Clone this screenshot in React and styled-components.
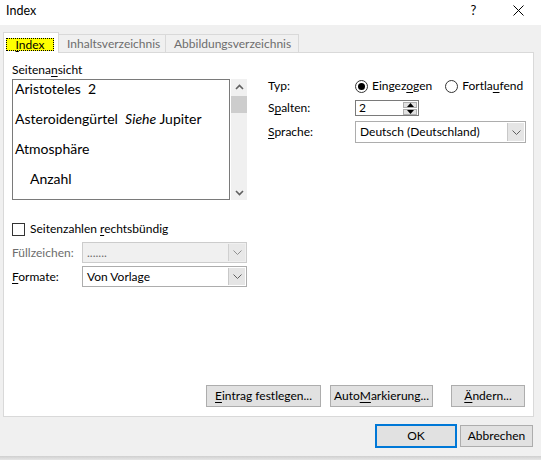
import React from 'react';
import styled, { createGlobalStyle } from 'styled-components';

const Global = createGlobalStyle`
  html, body { margin: 0; padding: 0; background: #ffffff; }
  body {
    font-family: Lato, "Noto Sans", sans-serif;
    font-size: 12px;
    color: #000;
  }
  * { box-sizing: border-box; }
`;

const Frame = styled.div`
  width: 541px;
  height: 460px;
  display: flex;
  flex-direction: column;
  overflow: hidden;
`;

const Window = styled.div`
  width: 541px;
  height: 456px;
  background: #f0f0f0;
  display: flex;
  flex-direction: column;
`;

const Shadow = styled.div`
  height: 4px;
  background: linear-gradient(#cfcfcf, #e6e6e6);
`;

const TitleBar = styled.div`
  height: 25px;
  background: #ffffff;
  display: flex;
  align-items: center;
  padding-left: 6px;
`;

const Title = styled.div`
  flex: 1;
  font-size: 12.5px;
  line-height: 16px;
  margin-top: -4px;
`;

const TitleButton = styled.div`
  width: 45px;
  height: 25px;
  display: flex;
  align-items: center;
  justify-content: center;
  margin-top: -5px;
  font-size: 13px;
`;

const TabStrip = styled.div`
  display: flex;
  align-items: flex-end;
  margin-top: 7px;
  padding-left: 3px;
  height: 20px;
  position: relative;
  z-index: 1;
`;

const Tab = styled.div`
  height: ${p => (p.$active ? '21px' : '18px')};
  width: ${p => p.$w}px;
  margin-bottom: ${p => (p.$active ? '-1px' : '0')};
  background: ${p => (p.$active ? '#ffffff' : '#f0f0f0')};
  border: 1px solid #d9d9d9;
  border-bottom: none;
  margin-left: ${p => (p.$first ? '0' : '-1px')};
  display: flex;
  align-items: ${p => (p.$active ? 'flex-start' : 'center')};
  padding-left: ${p => (p.$active ? '2px' : '8px')};
  padding-top: ${p => (p.$active ? '5px' : '0')};
  color: ${p => (p.$active ? '#000' : '#6d6d6d')};
  line-height: 14px;
  white-space: nowrap;
`;

const FocusLabel = styled.span`
  background: #ffff00;
  outline: 1px dotted #000;
  outline-offset: -1px;
  width: 48px;
  text-align: center;
  height: 13px;
  line-height: 13px;
  display: inline-block;
`;

const Panel = styled.div`
  margin-left: 3px;
  width: 531px;
  height: 365px;
  background: #ffffff;
  border: 1px solid #d9d9d9;
  display: flex;
  flex-direction: column;
  padding: 9px 8px 9px 8px;
`;

const TopArea = styled.div`
  display: grid;
  grid-template-columns: 235px 258px;
  column-gap: 21px;
`;

const Column = styled.div`
  display: flex;
  flex-direction: column;
`;

const Label = styled.div`
  height: 16px;
  line-height: 16px;
  color: ${p => (p.$disabled ? '#6d6d6d' : '#000')};
  width: ${p => (p.$w ? `${p.$w}px` : 'auto')};
  flex-shrink: 0;
  white-space: nowrap;
`;

const U = styled.span`
  text-decoration: underline;
  text-underline-offset: 2px;
`;

const ListRow = styled.div`
  display: flex;
  margin-top: 1px;
  height: 121px;
`;

const ListBox = styled.div`
  width: 219px;
  border: 1px solid #7a7a7a;
  padding: 0 0 0 2px;
  font-size: 14px;
  overflow: hidden;
`;

const ListItem = styled.div`
  height: 30px;
  line-height: 18px;
  padding-left: ${p => (p.$indent ? '15px' : '0')};
  white-space: nowrap;
`;

const Scrollbar = styled.div`
  width: 16px;
  margin-left: 1px;
  background: #f0f0f0;
  display: flex;
  flex-direction: column;
  align-items: center;
  justify-content: space-between;
  padding: 5px 0 4px 0;
  position: relative;
`;

const Thumb = styled.div`
  position: absolute;
  left: 0;
  top: 17px;
  width: 16px;
  height: 17px;
  background: #cdcdcd;
`;

const CheckRow = styled.div`
  display: flex;
  align-items: center;
  margin-top: 22px;
  height: 14px;
`;

const CheckBox = styled.div`
  width: 13px;
  height: 13px;
  border: 1px solid #333333;
  background: #fff;
  margin-right: 5px;
`;

const FieldRow = styled.div`
  display: flex;
  align-items: center;
  margin-top: ${p => p.$mt}px;
`;

const Select = styled.div`
  width: ${p => p.$w}px;
  height: ${p => p.$h}px;
  border: 1px solid ${p => (p.$disabled ? '#cccccc' : '#adadad')};
  background: ${p => (p.$disabled ? '#f0f0f0' : '#ffffff')};
  color: ${p => (p.$disabled ? '#6d6d6d' : '#000')};
  display: flex;
  align-items: center;
  padding-left: 4px;
`;

const SelectText = styled.div`
  flex: 1;
  line-height: 16px;
  white-space: nowrap;
`;

const DropButton = styled.div`
  width: 17px;
  align-self: stretch;
  margin: 1px;
  background: ${p => (p.$disabled ? '#e8e8e8' : '#e5e5e5')};
  border-left: 1px solid ${p => (p.$disabled ? '#d0d0d0' : '#c8c8c8')};
  display: flex;
  align-items: center;
  justify-content: center;
`;

const RightColumn = styled(Column)`
  padding-top: 15px;
`;

const Row = styled.div`
  display: flex;
  align-items: center;
  height: ${p => p.$h}px;
  margin-top: ${p => p.$mt || 0}px;
`;

const Radio = styled.div`
  width: 13px;
  height: 13px;
  border-radius: 50%;
  border: 1px solid #333333;
  display: flex;
  align-items: center;
  justify-content: center;
  margin-right: 4px;
  margin-left: ${p => p.$ml || 0}px;
  &::after {
    content: '';
    width: 7px;
    height: 7px;
    border-radius: 50%;
    background: ${p => (p.$checked ? '#000' : 'transparent')};
  }
`;

const Spinner = styled.div`
  width: 64px;
  height: 16px;
  border: 1px solid #7a7a7a;
  display: flex;
  align-items: center;
  padding-left: 3px;
`;

const SpinButtons = styled.div`
  width: 14px;
  align-self: stretch;
  margin: 1px 1px 1px 0;
  display: flex;
  flex-direction: column;
  gap: 1px;
`;

const SpinBtn = styled.div`
  flex: 1;
  background: #e1e1e1;
  border: 1px solid #adadad;
  display: flex;
  align-items: center;
  justify-content: center;
`;

const Spacer = styled.div`
  flex: 1;
`;

const ButtonRow = styled.div`
  display: flex;
  justify-content: flex-end;
`;

const Button = styled.div`
  width: ${p => p.$w}px;
  height: ${p => p.$h || 22}px;
  margin-left: ${p => p.$ml || 0}px;
  background: #e1e1e1;
  border: ${p => (p.$default ? '2px solid #0078d7' : '1px solid #adadad')};
  display: flex;
  align-items: center;
  justify-content: center;
  line-height: 16px;
  white-space: nowrap;
`;

const Footer = styled.div`
  display: flex;
  justify-content: flex-end;
  align-items: center;
  margin-top: 7px;
  padding-right: 8px;
  height: 24px;
`;

const Chevron = ({ up, color = '#606060' }) => (
  <svg width="9" height="5" viewBox="0 0 9 5">
    <polyline
      points={up ? '0.5,4.5 4.5,0.5 8.5,4.5' : '0.5,0.5 4.5,4.5 8.5,0.5'}
      fill="none"
      stroke={color}
      strokeWidth="1"
    />
  </svg>
);

const BoldChevron = ({ up }) => (
  <svg width="9" height="6" viewBox="0 0 9 6">
    <polyline
      points={up ? '1,5 4.5,1.5 8,5' : '1,1 4.5,4.5 8,1'}
      fill="none"
      stroke="#606060"
      strokeWidth="1.6"
    />
  </svg>
);

const Tri = ({ up }) => (
  <svg width="7" height="4" viewBox="0 0 7 4">
    <polygon points={up ? '0,4 3.5,0 7,4' : '0,0 3.5,4 7,0'} fill="#000" />
  </svg>
);

export default function App() {
  return (
    <>
      <Global />
      <Frame>
        <Window>
          <TitleBar>
            <Title>Index</Title>
            <TitleButton>?</TitleButton>
            <TitleButton>
              <svg width="11" height="11" viewBox="0 0 11 11">
                <path d="M0.5 0.5 L10.5 10.5 M10.5 0.5 L0.5 10.5" stroke="#000" strokeWidth="1" />
              </svg>
            </TitleButton>
          </TitleBar>

          <TabStrip>
            <Tab $active $first $w={56}>
              <FocusLabel><U>I</U>ndex</FocusLabel>
            </Tab>
            <Tab $w={108}>Inhaltsverzeichnis</Tab>
            <Tab $w={134}>Abbildungsverzeichnis</Tab>
          </TabStrip>

          <Panel>
            <TopArea>
              <Column>
                <Label>Seitena<U>n</U>sicht</Label>
                <ListRow>
                  <ListBox>
                    <ListItem>Aristoteles&nbsp; 2</ListItem>
                    <ListItem>Asteroidengürtel&nbsp; <i>Siehe</i> Jupiter</ListItem>
                    <ListItem>Atmosphäre</ListItem>
                    <ListItem $indent>Anzahl</ListItem>
                  </ListBox>
                  <Scrollbar>
                    <BoldChevron up />
                    <Thumb />
                    <BoldChevron />
                  </Scrollbar>
                </ListRow>

                <CheckRow>
                  <CheckBox />
                  <Label>Seitenzahlen <U>r</U>echtsbündig</Label>
                </CheckRow>

                <FieldRow $mt={6}>
                  <Label $w={70} $disabled>Füllzeichen:</Label>
                  <Select $w={165} $h={21} $disabled>
                    <SelectText>.......</SelectText>
                    <DropButton $disabled><Chevron color="#909090" /></DropButton>
                  </Select>
                </FieldRow>

                <FieldRow $mt={3}>
                  <Label $w={70}><U>F</U>ormate:</Label>
                  <Select $w={165} $h={21}>
                    <SelectText>Von Vorlage</SelectText>
                    <DropButton><Chevron /></DropButton>
                  </Select>
                </FieldRow>
              </Column>

              <RightColumn>
                <Row $h={18}>
                  <Label $w={87}>Typ:</Label>
                  <Radio $checked />
                  <Label>Eingez<U>o</U>gen</Label>
                  <Radio $ml={13} />
                  <Label>Fortla<U>u</U>fend</Label>
                </Row>
                <Row $h={16} $mt={5}>
                  <Label $w={87}>S<U>p</U>alten:</Label>
                  <Spinner>
                    <SelectText>2</SelectText>
                    <SpinButtons>
                      <SpinBtn><Tri up /></SpinBtn>
                      <SpinBtn><Tri /></SpinBtn>
                    </SpinButtons>
                  </Spinner>
                </Row>
                <Row $h={22} $mt={5}>
                  <Label $w={87}><U>S</U>prache:</Label>
                  <Select $w={171} $h={22}>
                    <SelectText>Deutsch (Deutschland)</SelectText>
                    <DropButton><Chevron /></DropButton>
                  </Select>
                </Row>
              </RightColumn>
            </TopArea>

            <Spacer />

            <ButtonRow>
              <Button $w={115}><U>E</U>intrag festlegen...</Button>
              <Button $w={103} $ml={9}>Auto<U>M</U>arkierung...</Button>
              <Button $w={74} $ml={18}><U>Ä</U>ndern...</Button>
            </ButtonRow>
          </Panel>

          <Footer>
            <Button $default $w={82} $h={24}>OK</Button>
            <Button $w={73} $h={22} $ml={3}>Abbrechen</Button>
          </Footer>
        </Window>
        <Shadow />
      </Frame>
    </>
  );
}
